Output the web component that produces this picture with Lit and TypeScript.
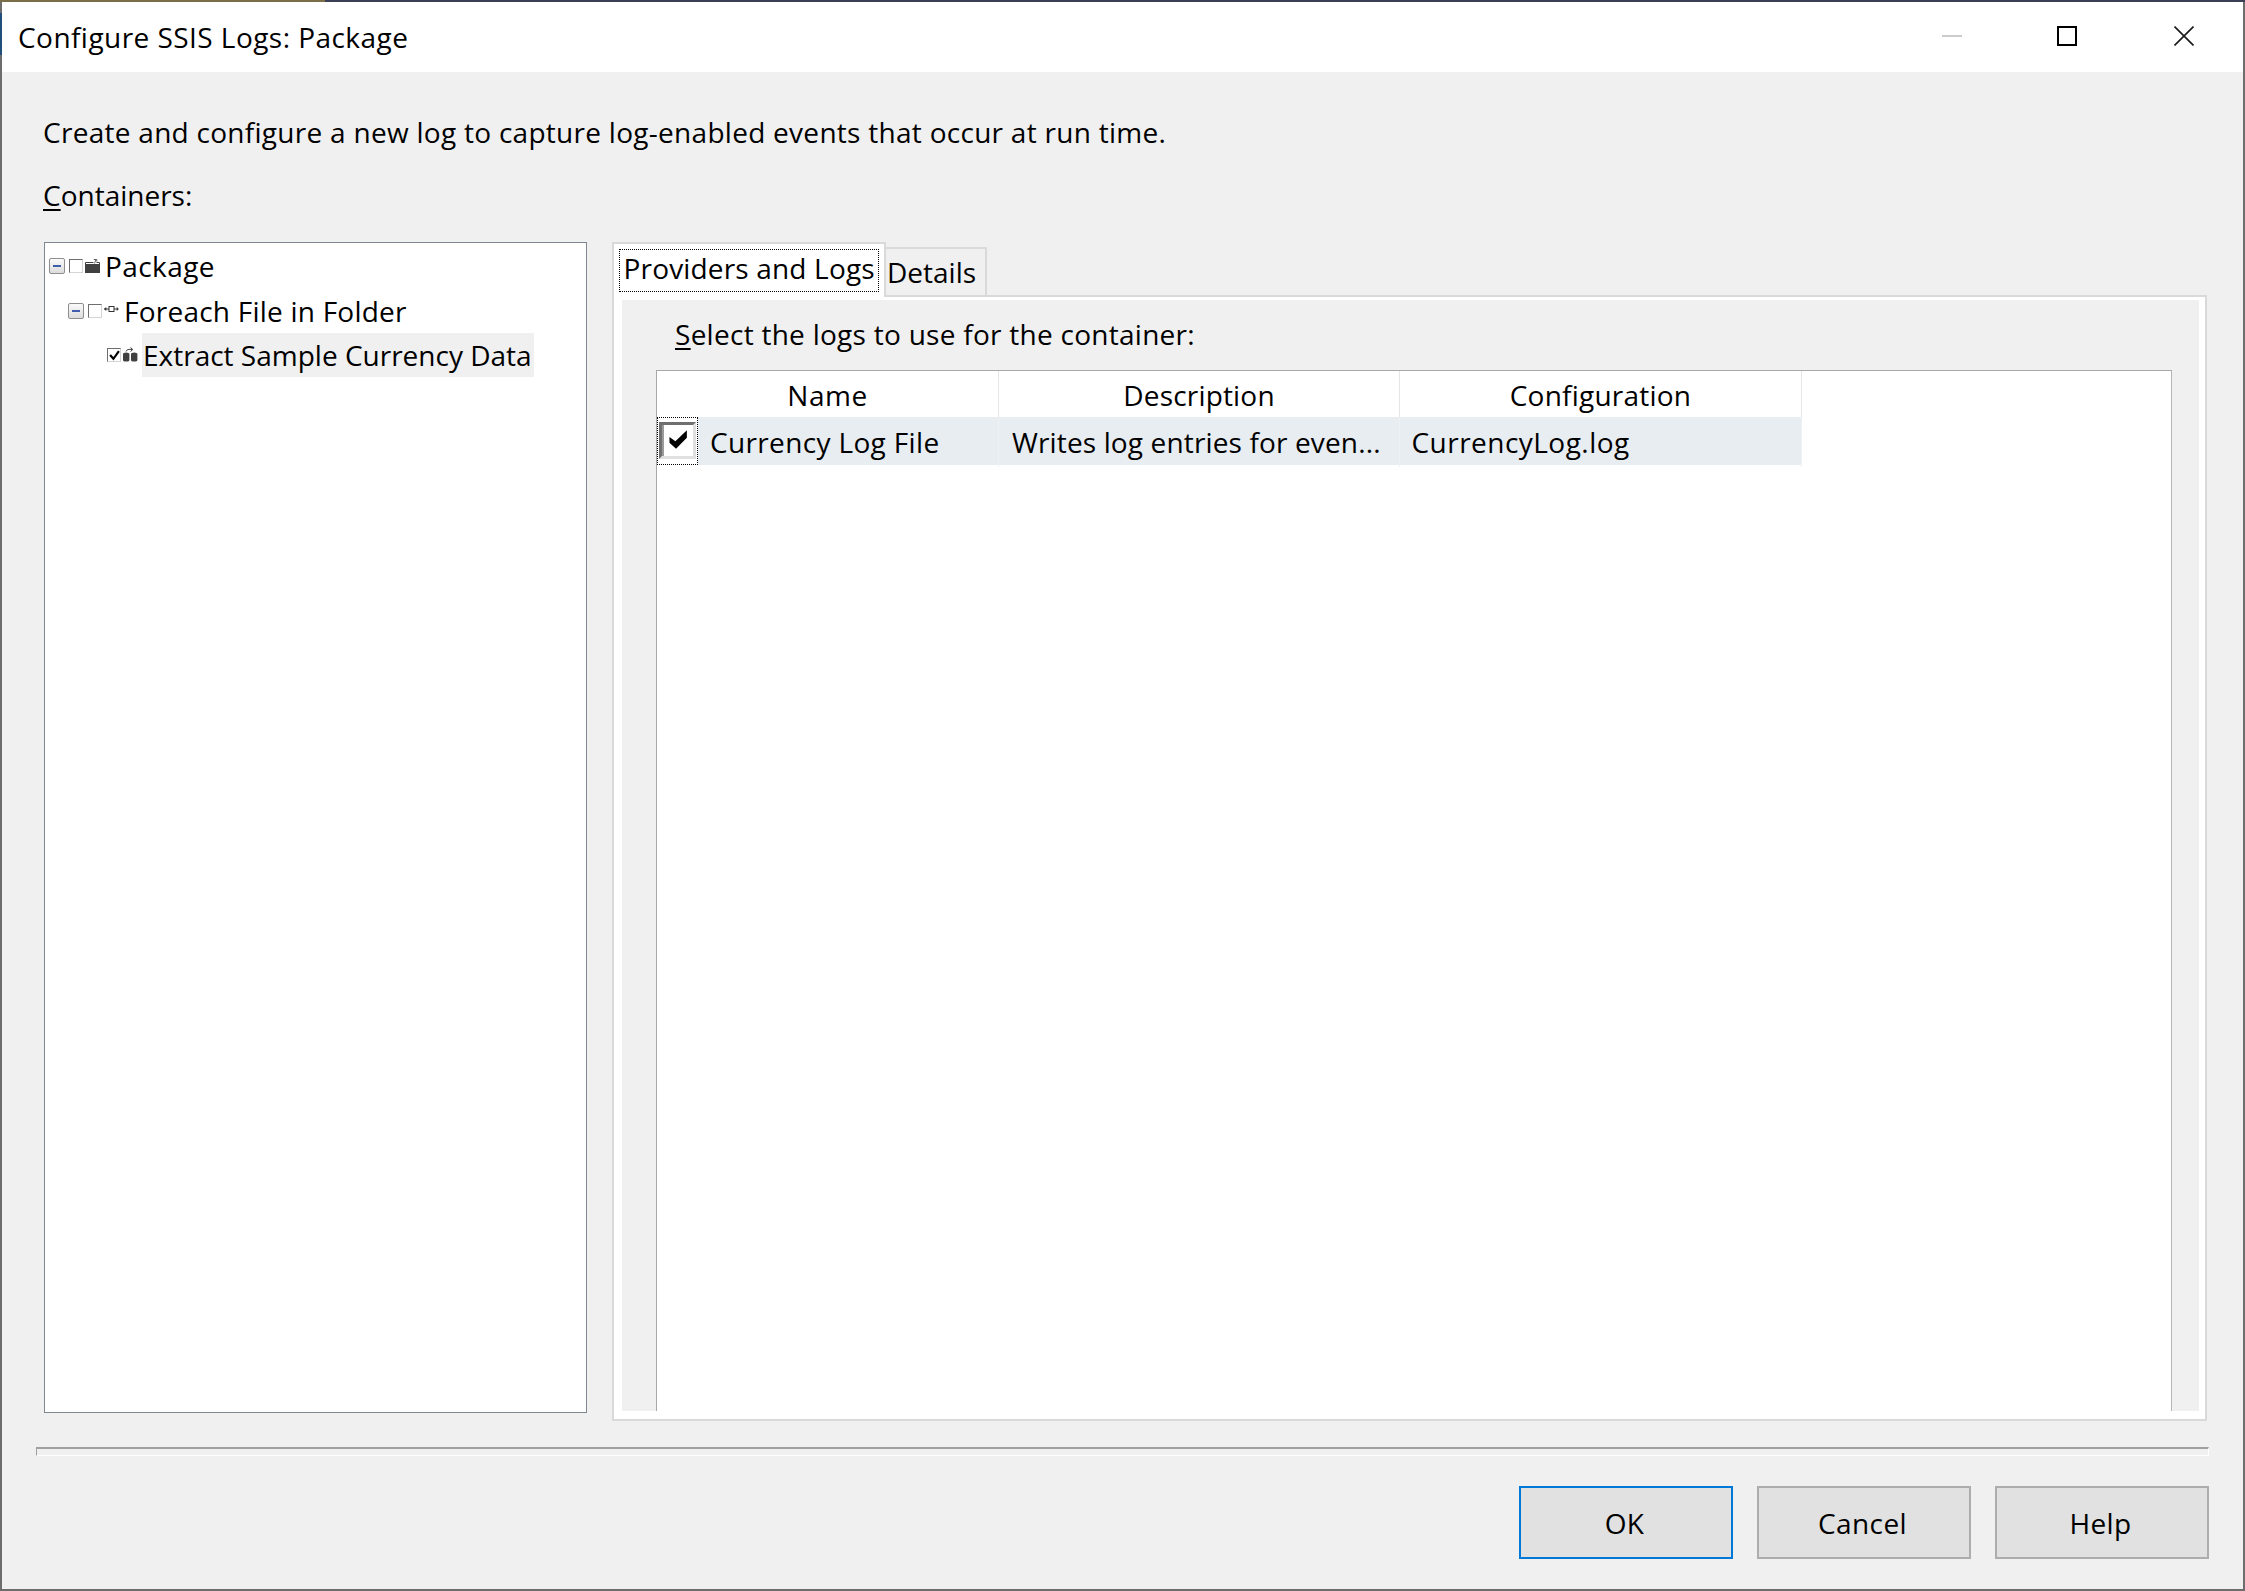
import { LitElement, html, css } from "lit";
import { customElement } from "lit/decorators.js";

@customElement("app-root")
export class AppRoot extends LitElement {
  static styles = css`
    :host { display: block; width: 2245px; height: 1591px; font-family: "Open Sans", "Noto Sans", sans-serif; font-size: 28px; line-height: 40px; color: #000; }
    * { box-sizing: border-box; }
    .window { position: relative; width: 2245px; height: 1591px; display: flex; flex-direction: column; background: #f0f0f0; border: 2px solid #6d6d6d; border-top: 0; }
    .edge { position: absolute; left: -2px; top: 13px; width: 2px; height: 42px; background: #1f4f7a; }
    .strip { height: 2px; flex: none; display: grid; grid-template-columns: 325px 1fr; margin: 0 -2px; }
    .strip i:first-child { background: #7d6e4a; }
    .strip i:last-child { background: #3a3f55; }
    .titlebar { height: 70px; flex: none; background: #fff; display: flex; align-items: center; padding: 0 49px 0 16px; }
    .title { flex: 1; letter-spacing: 0.45px; }
    .ctl { display: flex; gap: 95px; align-items: center; margin-top: -2px; }
    .ctl svg { display: block; }
    .ctl .close { margin-left: 2px; }
    .content { flex: 1; display: flex; flex-direction: column; padding: 40px 34px 0 34px; }
    .intro { margin-left: 7px; height: 40px; letter-spacing: 0.28px; }
    .caption { margin: 23px 0 27px 7px; height: 40px; }
    u { text-underline-offset: 3px; text-decoration-thickness: 2px; }
    .main { display: grid; grid-template-columns: 543px 1fr; gap: 25px; margin: 0 2.5px 0 8px; height: 1179px; align-items: start; }
    .tree { height: 1171px; background: #fff; border: 1px solid #7f8790; display: flex; flex-direction: column; padding: 1px 0 0 4px; }
    .node { height: 44.5px; flex: none; display: flex; align-items: center; }
    .node.l1 { padding-left: 19px; }
    .node.l2 { padding-left: 38px; }
    .exp { width: 16px; height: 16px; margin-right: 4px; border: 1px solid #8e8e8e; border-radius: 2px; background: linear-gradient(#fafafa, #dcdcdc); display: flex; align-items: center; justify-content: center; }
    .exp::before { content: ""; width: 8px; height: 2px; background: #3f5fae; }
    .exp.none { visibility: hidden; }
    .cb { width: 14px; height: 14px; margin-right: 2px; background: #fff; border: 1px solid; border-color: #6e6e6e #d4d4d4 #d4d4d4 #6e6e6e; display: flex; align-items: center; justify-content: center; }
    .cb svg, .icon { display: block; }
    .icon { margin-top: -2px; margin-right: 4px; flex: none; }
    .label { height: 44px; line-height: 45px; white-space: nowrap; padding-left: 1px; }
    .label.pkg { letter-spacing: 0.43px; }
    .label.loop { letter-spacing: 0.23px; }
    .label.sel { background: #f0f0f0; width: 392px; }
    .tabs { height: 1179px; display: flex; flex-direction: column; }
    .strip2 { height: 53px; flex: none; display: flex; align-items: flex-end; }
    .tab1 { position: relative; z-index: 1; width: 274px; height: 55px; margin-bottom: -2px; background: #fff; border: 2px solid #d9d9d9; border-bottom: 0; padding: 5px 0 0 5px; align-self: flex-start; }
    .focus { width: 260px; height: 43px; border: 1px dotted #000; padding-left: 3.5px; line-height: 36px; white-space: nowrap; letter-spacing: 0.17px; }
    .tab2 { width: 101px; height: 48px; background: #f0f0f0; border: 2px solid #d9d9d9; border-left: 0; border-bottom: 0; padding-left: 1px; line-height: 47px; white-space: nowrap; }
    .panel { flex: 1; background: #fff; border: 2px solid #d9d9d9; padding: 3px 5.5px 8px 8px; display: flex; min-height: 0; }
    .inner { flex: 1; background: #f0f0f0; padding: 14px 27px 0 34px; display: flex; flex-direction: column; min-width: 0; }
    .sel-cap { margin-left: 19px; height: 40px; margin-bottom: 16px; letter-spacing: 0.27px; }
    .list { flex: 1; background: #fff; border: 1px solid #b5b5b5; border-bottom: 0; border-top-color: #a8a8a8; border-left-color: #a8a8a8; }
    .head, .row { display: grid; grid-template-columns: 342px 401px 402px; width: 1145px; }
    .head { height: 46px; }
    .head div { border-right: 1px solid #e6e6e6; text-align: center; line-height: 49px; }
    .h-name { letter-spacing: 0.5px; }
    .h-desc { letter-spacing: 0.18px; }
    .h-conf { letter-spacing: 0.23px; }
    .row { height: 47.5px; background: #e8edf1; }
    .cell { border-right: 1px solid #eef1f4; line-height: 50px; white-space: nowrap; padding-left: 11.5px; }
    .cell.first { display: flex; padding-left: 0; letter-spacing: 0.35px; }
    .cell.d { letter-spacing: 0.14px; padding-left: 13px; }
    .cell.c { letter-spacing: 0.47px; }
    .cfocus { width: 41px; height: 47.5px; flex: none; background: #fff; border: 1px dotted #000; display: flex; align-items: center; justify-content: center; margin-right: 12px; }
    .box { width: 37px; height: 37px; border: solid; border-width: 3px; border-color: #6f6f6f #e0e0e0 #e0e0e0 #6f6f6f; background: #fff; box-shadow: inset 2px 0 0 #9a9a9a; display: flex; align-items: center; justify-content: center; padding-bottom: 2px; }
    .sep { height: 9px; flex: none; margin-top: 26px; border: solid; border-width: 2px 1px 1px 1px; border-color: #a0a0a0 #fff #fff #a0a0a0; }
    .buttons { display: flex; justify-content: flex-end; gap: 24px; margin-top: 30px; }
    .btn { width: 214px; height: 73px; background: #e1e1e1; border: 2px solid #adadad; display: flex; align-items: center; justify-content: center; padding-right: 3px; letter-spacing: 0.4px; }
    .btn.def { border-color: #0078d7; }
  `;

  private pkgIcon() {
    return html`<svg class="icon" width="15" height="15" viewBox="0 0 15 15"><rect x="0" y="6" width="15" height="9" fill="#404040"/><path d="M.5 6V4.5h8M11.5 4.5h3V6" stroke="#404040" fill="none"/><path d="M9.5 5.5L11 1.5M8.8 1.5h3v2" stroke="#606060" fill="none"/></svg>`;
  }
  private loopIcon() {
    return html`<svg class="icon" width="15" height="15" viewBox="0 0 15 15"><rect x="5" y="4.5" width="5" height="5" fill="#fff" stroke="#333"/><path d="M0 7h5M10 7h4" stroke="#333"/><path d="M2 5.5V8.5L.5 7zM13 5.5V8.5L14.5 7z" fill="#333" stroke="#333" stroke-width=".5"/></svg>`;
  }
  private taskIcon() {
    return html`<svg class="icon" width="15" height="15" viewBox="0 0 15 15"><path d="M0 7a3 1.5 0 0 1 6.4 0V13a3 1.5 0 0 1-6.4 0zM8 7a3 1.5 0 0 1 6.4 0V13a3 1.5 0 0 1-6.4 0z" fill="#404040"/><path d="M3 4.5C3.5 2.5 6 2 9 2.5M7.5.5L9.8 2.5 7.5 4.5" stroke="#404040" fill="none"/></svg>`;
  }

  render() {
    return html`
      <div class="window">
        <span class="edge"></span>
        <div class="strip"><i></i><i></i></div>
        <div class="titlebar">
          <div class="title">Configure SSIS Logs: Package</div>
          <div class="ctl">
            <svg width="20" height="20" viewBox="0 0 20 20"><rect x="0" y="9" width="20" height="2" fill="#cccccc"/></svg>
            <svg width="20" height="20" viewBox="0 0 20 20"><rect x="1" y="1" width="18" height="18" fill="none" stroke="#000" stroke-width="2"/></svg>
            <svg class="close" width="20" height="20" viewBox="0 0 20 20"><path d="M.5.5l19 19M19.5.5l-19 19" stroke="#1a1a1a" stroke-width="1.6" fill="none"/></svg>
          </div>
        </div>
        <div class="content">
          <div class="intro">Create and configure a new log to capture log-enabled events that occur at run time.</div>
          <div class="caption"><u>C</u>ontainers:</div>
          <div class="main">
            <div class="tree">
              <div class="node"><span class="exp"></span><span class="cb"></span>${this.pkgIcon()}<span class="label pkg">Package</span></div>
              <div class="node l1"><span class="exp"></span><span class="cb"></span>${this.loopIcon()}<span class="label loop">Foreach File in Folder</span></div>
              <div class="node l2"><span class="exp none"></span><span class="cb"><svg width="11" height="11" viewBox="0 0 10 10"><path d="M1 4.5l3 3.5 5-7" stroke="#000" stroke-width="2" fill="none"/></svg></span>${this.taskIcon()}<span class="label sel">Extract Sample Currency Data</span></div>
            </div>
            <div class="tabs">
              <div class="strip2">
                <div class="tab1"><div class="focus">Providers and Logs</div></div>
                <div class="tab2">Details</div>
              </div>
              <div class="panel">
                <div class="inner">
                  <div class="sel-cap"><u>S</u>elect the logs to use for the container:</div>
                  <div class="list">
                    <div class="head"><div class="h-name">Name</div><div class="h-desc">Description</div><div class="h-conf">Configuration</div></div>
                    <div class="row">
                      <div class="cell first">
                        <div class="cfocus"><div class="box"><svg width="20" height="21" viewBox="48 58 60 64"><path d="M52 82L70 95 105 62V85L72 118 52 100z" fill="#000"/></svg></div></div>
                        <span>Currency Log File</span>
                      </div>
                      <div class="cell d">Writes log entries for even...</div>
                      <div class="cell c">CurrencyLog.log</div>
                    </div>
                  </div>
                </div>
              </div>
            </div>
          </div>
          <div class="sep"></div>
          <div class="buttons">
            <div class="btn def">OK</div>
            <div class="btn">Cancel</div>
            <div class="btn">Help</div>
          </div>
        </div>
      </div>
    `;
  }
}
